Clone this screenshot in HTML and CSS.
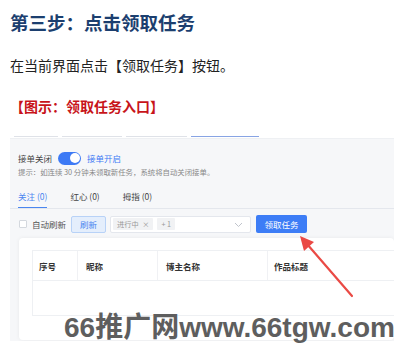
FILE: index.html
```html
<!DOCTYPE html>
<html lang="zh">
<head>
<meta charset="utf-8">
<link rel="stylesheet" href="styles.css">
</head>
<body>
<div class="doc">
  <h2 class="title">第三步：点击领取任务</h2>
  <p class="para">在当前界面点击【领取任务】按钮。</p>
  <h3 class="fig">【图示：领取任务入口】</h3>
  <div class="shot">
    <div class="topnav">
      <span class="tn" style="width:44px"></span>
      <span class="tn" style="width:60px"></span>
      <span class="tn" style="width:61px"></span>
      <span class="tn active" style="width:68px"></span>
    </div>
    <div class="panel">
      <div class="switchrow">
        <span>接单关闭</span>
        <span class="toggle"><span class="knob"></span></span>
        <span class="on">接单开启</span>
      </div>
      <div class="hint">提示：如连续 30 分钟未领取新任务，系统将自动关闭接单。</div>
      <div class="tabs">
        <span class="tab active">关注 (0)</span>
        <span class="tab">红心 (0)</span>
        <span class="tab">拇指 (0)</span>
      </div>
      <div class="toolbar">
        <span class="check"></span>
        <span class="auto">自动刷新</span>
        <span class="btn-light">刷新</span>
        <span class="select">
          <span class="tag">进行中 <span class="x">×</span></span>
          <span class="tag">+ 1</span>
          <svg class="chev" width="9" height="6" viewBox="0 0 9 6"><path d="M1 1l3.5 3.5L8 1" fill="none" stroke="#c0c4cc" stroke-width="1"/></svg>
        </span>
        <span class="btn-primary">领取任务</span>
      </div>
      <div class="card">
        <div class="table">
          <div class="thead">
            <div class="th c1">序号</div>
            <div class="th c2">昵称</div>
            <div class="th c3">博主名称</div>
            <div class="th c4">作品标题</div>
          </div>
          <div class="tbody"></div>
        </div>
      </div>
    </div>
  </div>
</div>
<svg class="arrow" width="394" height="343" viewBox="0 0 394 343">
  <line x1="352" y1="296" x2="307" y2="244" stroke="#ea4a45" stroke-width="2.2" stroke-linecap="round"/>
  <polygon points="300,236 314,242 304,251" fill="#ea4a45"/>
</svg>
<div class="watermark">66推广网www.66tgw.com</div>
</body>
</html>
```

FILE: styles.css
```css
html, body {
  margin: 0;
  padding: 0;
  background: #fff;
  overflow: hidden;
}
body {
  width: 394px;
  height: 343px;
  position: relative;
  font-family: "Noto Sans CJK SC", "Noto Sans", sans-serif;
  color: #333;
}
.doc {
  padding: 9px 0 0 10px;
}
.title {
  margin: 0;
  font-size: 18.5px;
  line-height: 26px;
  font-weight: 700;
  color: #1c3f6f;
}
.para {
  margin: 20px 0 0;
  font-size: 14px;
  line-height: 20px;
  color: #222;
}
.fig {
  margin: 21px 0 0;
  font-size: 14px;
  line-height: 20px;
  font-weight: 700;
  color: #c8141a;
}
.shot {
  margin-top: 19px;
}
.topnav {
  display: flex;
  gap: 4px;
  padding-left: 4px;
  height: 2px;
  align-items: flex-end;
}
.tn {
  display: block;
  height: 1.5px;
  background: #dfe2e8;
}
.tn.active {
  background: #88a4e4;
}
.panel {
  margin-top: 1px;
  background: #f6f7f9;
  padding: 12px 0 0 8px;
  height: 190px;
  border-top: 1px solid #eef0f3;
  overflow: hidden;
}
.switchrow {
  display: flex;
  align-items: center;
  gap: 6px;
  height: 14px;
  font-size: 8.5px;
  color: #444;
}
.toggle {
  display: block;
  width: 23px;
  height: 13px;
  border-radius: 7px;
  background: #3d7af5;
  position: relative;
}
.knob {
  position: absolute;
  right: 1.5px;
  top: 1.5px;
  width: 10px;
  height: 10px;
  border-radius: 50%;
  background: #fff;
}
.on {
  color: #3d7af5;
}
.hint {
  margin-top: 2px;
  font-size: 7.4px;
  line-height: 10px;
  color: #888;
}
.tabs {
  margin-top: 9px;
  display: flex;
  gap: 23px;
  border-bottom: 1px solid #e4e7ed;
  margin-left: -8px;
  padding-left: 8px;
}
.tab {
  font-size: 8.5px;
  line-height: 20px;
  padding-bottom: 1px;
  border-bottom: 1.5px solid transparent;
  color: #444;
}
.tab.active {
  color: #4a86f0;
  border-bottom-color: #4a86f0;
}
.toolbar {
  margin-top: 6px;
  display: flex;
  align-items: center;
  height: 18px;
  font-size: 8.5px;
}
.check {
  width: 8px;
  height: 8px;
  border: 1px solid #d4d8de;
  background: #fff;
  border-radius: 1px;
  box-sizing: border-box;
  margin-left: 1px;
}
.auto {
  margin-left: 5px;
  color: #555;
}
.btn-light {
  margin-left: 5px;
  width: 35px;
  height: 17px;
  box-sizing: border-box;
  border: 1px solid #b8d2f7;
  background: #e4eefc;
  color: #4a86f0;
  border-radius: 2px;
  display: flex;
  align-items: center;
  justify-content: center;
}
.select {
  margin-left: 4px;
  width: 141px;
  height: 17px;
  box-sizing: border-box;
  border: 1px solid #e4e7ed;
  background: #fff;
  border-radius: 2px;
  display: flex;
  align-items: center;
  padding-left: 2px;
  gap: 4px;
  position: relative;
}
.tag {
  height: 12px;
  background: #f1f2f4;
  color: #999;
  font-size: 7.2px;
  line-height: 12px;
  padding: 0 4px;
  border-radius: 1px;
}
.tag .x {
  margin-left: 2px;
}
.chev {
  position: absolute;
  right: 7px;
  top: 5px;
}
.btn-primary {
  margin-left: 5px;
  width: 51px;
  height: 18px;
  background: #3d7df6;
  color: #fff;
  border-radius: 2px;
  display: flex;
  align-items: center;
  justify-content: center;
  font-size: 8.5px;
}
.card {
  margin-top: 5px;
  margin-left: 1px;
  background: #fff;
  border-radius: 4px;
  box-shadow: 0 0 4px rgba(0, 0, 0, 0.06);
  padding: 12px 0 0 13px;
  height: 90px;
}
.table {
  border: 1px solid #eef0f3;
  border-right: none;
}
.thead {
  display: flex;
  height: 29px;
  border-bottom: 1px solid #eef0f3;
}
.th {
  font-size: 8.5px;
  font-weight: 600;
  color: #333;
  display: flex;
  align-items: center;
  padding-left: 6px;
  box-sizing: border-box;
  border-right: 1px solid #f0f1f4;
}
.c1 { width: 45px; }
.c2 { width: 80px; padding-left: 8px; }
.c3 { width: 110px; padding-left: 8px; }
.c4 { flex: 1; border-right: none; }
.tbody {
  height: 34px;
}
.arrow {
  position: absolute;
  left: 0;
  top: 0;
  pointer-events: none;
}
.watermark {
  position: absolute;
  left: 64px;
  top: 313px;
  font-family: "Liberation Sans", "Noto Sans CJK SC", sans-serif;
  font-size: 28px;
  font-weight: 700;
  line-height: 30px;
  height: 30px;
  color: #5e5e5e;
  white-space: nowrap;
}
```
